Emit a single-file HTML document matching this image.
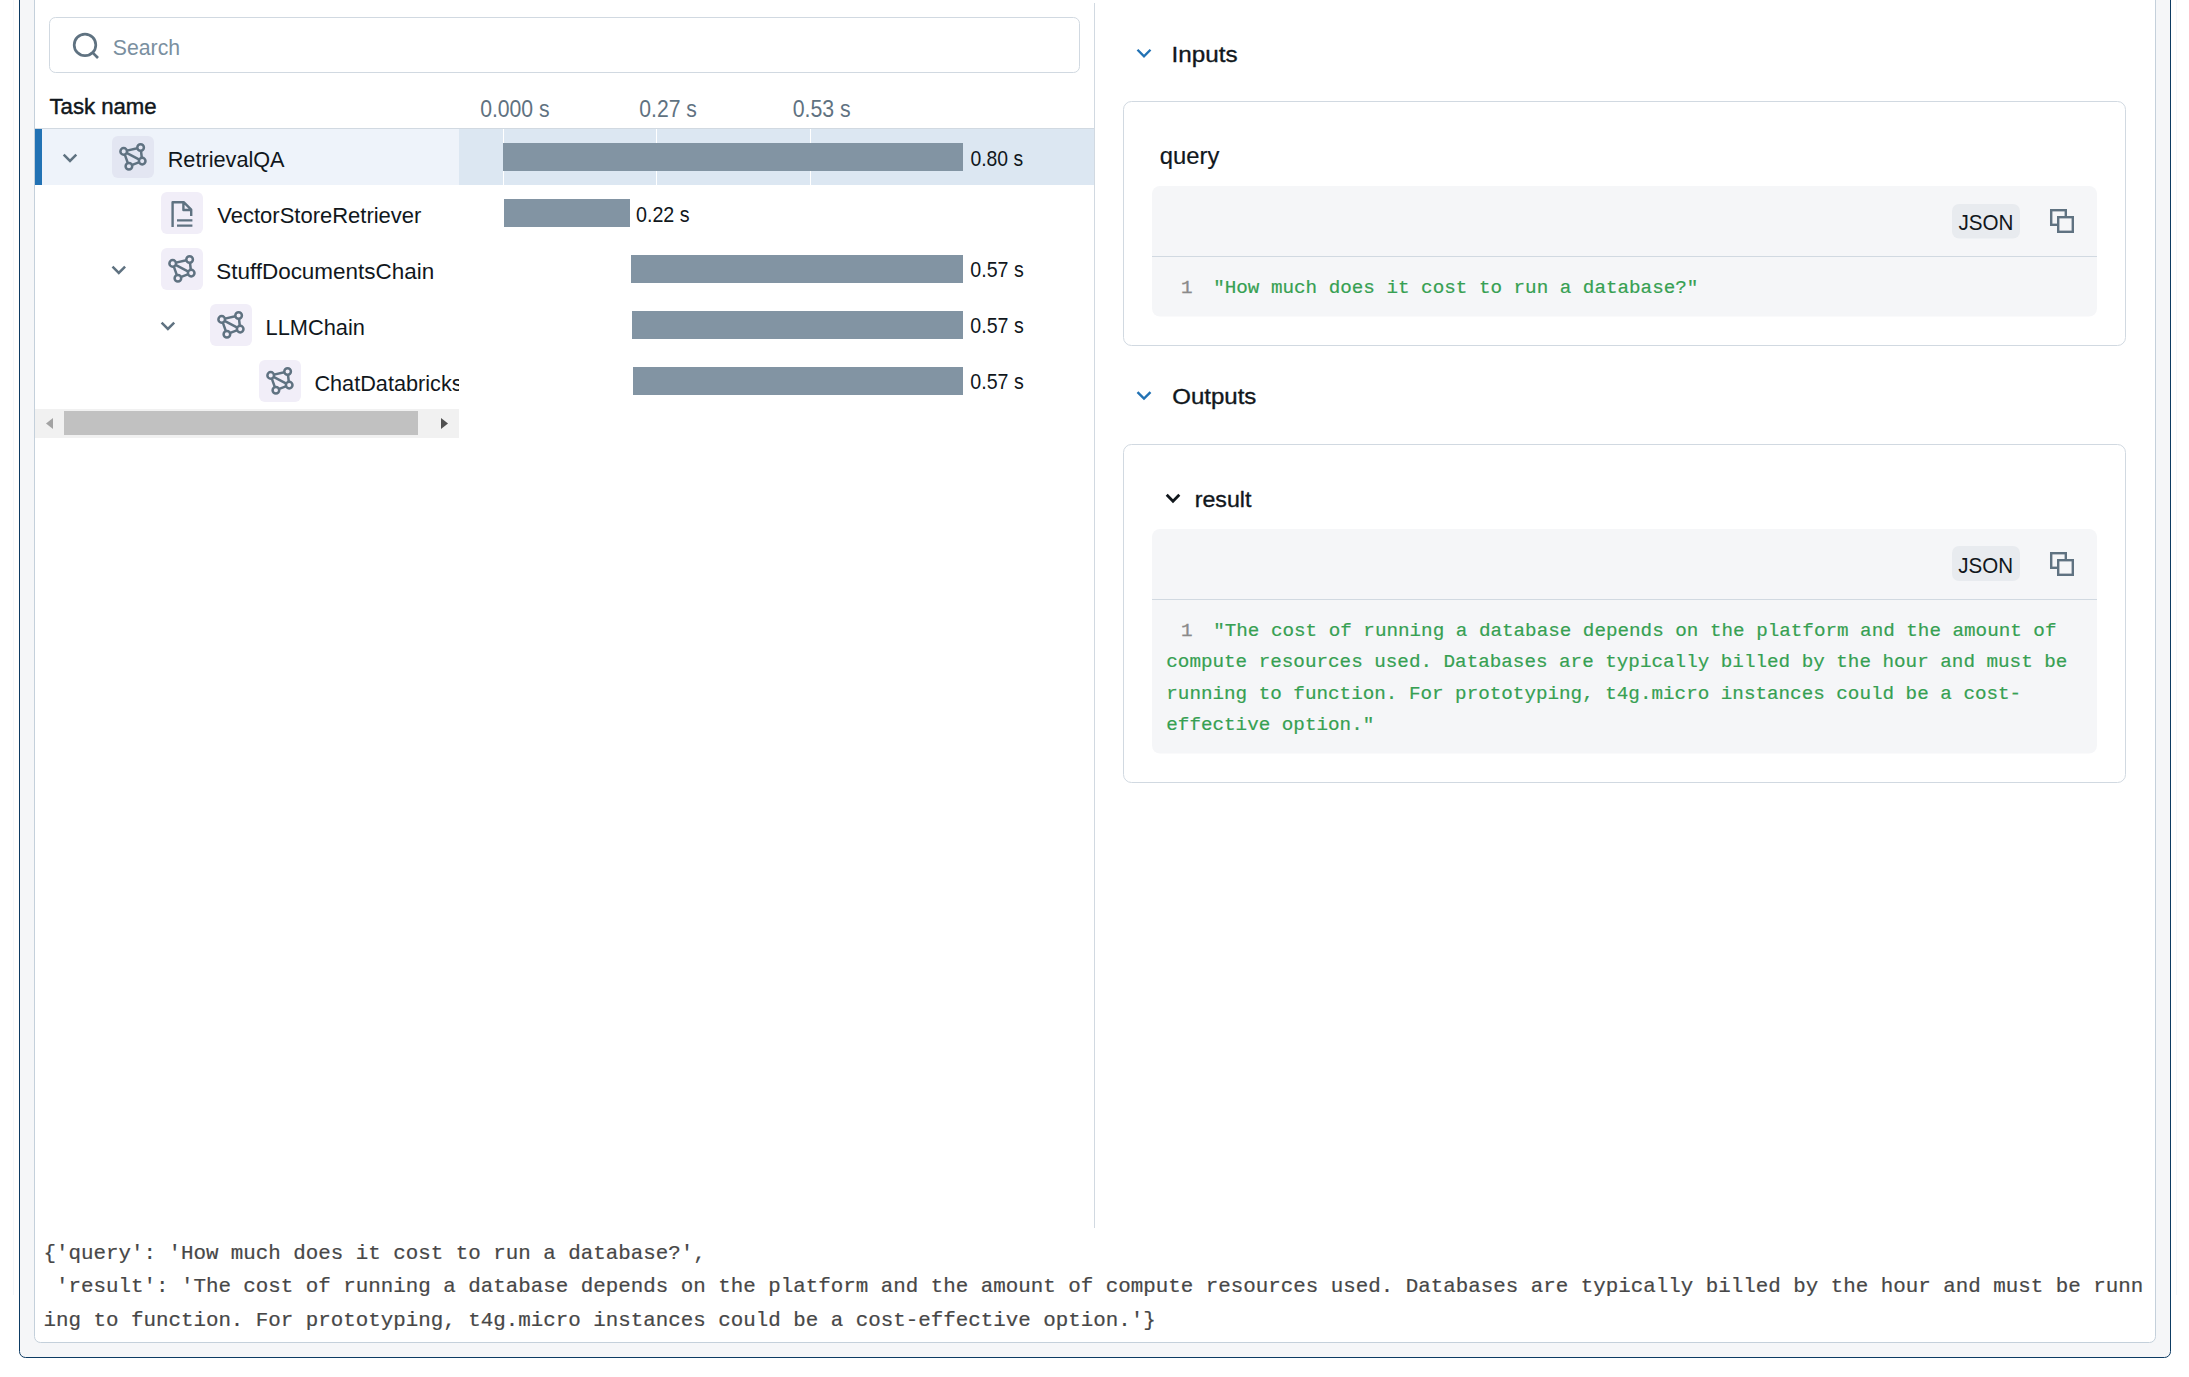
<!DOCTYPE html>
<html><head><meta charset="utf-8"><style>
html,body{margin:0;padding:0;background:#fff;width:2189px;height:1377px;overflow:hidden;}
svg{display:block;font-family:'Liberation Sans', sans-serif;}
</style></head><body>
<svg width="2189" height="1377" viewBox="0 0 2189 1377">
<defs><clipPath id="clipL"><rect x="35" y="0" width="424" height="1377"/></clipPath></defs>
<rect x="19.5" y="-20" width="2151" height="1377.5" rx="6" fill="#f5f6f8" stroke="#0d3b63" stroke-width="1"/>
<line x1="13.5" y1="0" x2="13.5" y2="1295" stroke="#f4f7fb" stroke-width="1"/>
<line x1="2176.5" y1="0" x2="2176.5" y2="1295" stroke="#f4f7fb" stroke-width="1"/>
<rect x="34.5" y="-20" width="2121" height="1362.5" rx="6" fill="#ffffff" stroke="#c4d0db" stroke-width="1"/>
<rect x="1094" y="3" width="1" height="1225" fill="#d1d9e1"/>
<rect x="49.5" y="17.5" width="1030" height="55" rx="6" fill="#fff" stroke="#d1d9e1" stroke-width="1"/>
<circle cx="85" cy="44.9" r="10.8" fill="none" stroke="#5f7281" stroke-width="2.7"/>
<path d="M92.6,52.6 L98,58" stroke="#5f7281" stroke-width="2.7" fill="none"/>
<rect x="35" y="128" width="1059" height="1" fill="#d1d9e1"/>
<rect x="35" y="129" width="424" height="56" fill="#eef3fa"/>
<rect x="459" y="129" width="635" height="56" fill="#dce7f2"/>
<rect x="503" y="129" width="1" height="56" fill="#ffffff"/>
<rect x="656" y="129" width="1" height="56" fill="#ffffff"/>
<rect x="810" y="129" width="1" height="56" fill="#ffffff"/>
<rect x="35" y="129" width="7" height="56" fill="#2272b4"/>
<rect x="503" y="143" width="460" height="28" fill="#8294a3"/>
<rect x="504" y="199" width="126" height="28" fill="#8294a3"/>
<rect x="631" y="255" width="332" height="28" fill="#8294a3"/>
<rect x="632" y="311" width="331" height="28" fill="#8294a3"/>
<rect x="633" y="367" width="330" height="28" fill="#8294a3"/>
<path d="M63.70,154.65 L70.00,160.95 L76.30,154.65" stroke="#5f7281" stroke-width="2.5" fill="none"/>
<path d="M112.50,266.65 L118.80,272.95 L125.10,266.65" stroke="#5f7281" stroke-width="2.5" fill="none"/>
<path d="M161.60,322.65 L167.90,328.95 L174.20,322.65" stroke="#5f7281" stroke-width="2.5" fill="none"/>
<rect x="112" y="136" width="42" height="42" rx="6" fill="#e3e6f2"/><path d="M123.70,151.40L140.60,147.50 M123.70,151.40L142.20,161.10 M123.70,151.40L128.90,166.20 M140.60,147.50L142.20,161.10 M128.90,166.20L142.20,161.10" stroke="#5f7281" stroke-width="2.5" fill="none"/><circle cx="123.70" cy="151.40" r="3.3" fill="#e3e6f2" stroke="#5f7281" stroke-width="2.5"/><circle cx="140.60" cy="147.50" r="3.3" fill="#e3e6f2" stroke="#5f7281" stroke-width="2.5"/><circle cx="142.20" cy="161.10" r="3.3" fill="#e3e6f2" stroke="#5f7281" stroke-width="2.5"/><circle cx="128.90" cy="166.20" r="3.3" fill="#e3e6f2" stroke="#5f7281" stroke-width="2.5"/>
<rect x="161" y="192" width="42" height="42" rx="6" fill="#f1eef8"/><path d="M172.6,226.9 V202.2 H183.7 L191.2,209.7 V216 M183.4,202.2 V210 H191.2 M177,220.4 H192.4 M177,225.6 H192.4" stroke="#5f7281" stroke-width="2.4" fill="none" stroke-linejoin="round"/>
<rect x="161" y="248" width="42" height="42" rx="6" fill="#f1eef8"/><path d="M172.70,263.40L189.60,259.50 M172.70,263.40L191.20,273.10 M172.70,263.40L177.90,278.20 M189.60,259.50L191.20,273.10 M177.90,278.20L191.20,273.10" stroke="#5f7281" stroke-width="2.5" fill="none"/><circle cx="172.70" cy="263.40" r="3.3" fill="#f1eef8" stroke="#5f7281" stroke-width="2.5"/><circle cx="189.60" cy="259.50" r="3.3" fill="#f1eef8" stroke="#5f7281" stroke-width="2.5"/><circle cx="191.20" cy="273.10" r="3.3" fill="#f1eef8" stroke="#5f7281" stroke-width="2.5"/><circle cx="177.90" cy="278.20" r="3.3" fill="#f1eef8" stroke="#5f7281" stroke-width="2.5"/>
<rect x="210" y="304" width="42" height="42" rx="6" fill="#f1eef8"/><path d="M221.70,319.40L238.60,315.50 M221.70,319.40L240.20,329.10 M221.70,319.40L226.90,334.20 M238.60,315.50L240.20,329.10 M226.90,334.20L240.20,329.10" stroke="#5f7281" stroke-width="2.5" fill="none"/><circle cx="221.70" cy="319.40" r="3.3" fill="#f1eef8" stroke="#5f7281" stroke-width="2.5"/><circle cx="238.60" cy="315.50" r="3.3" fill="#f1eef8" stroke="#5f7281" stroke-width="2.5"/><circle cx="240.20" cy="329.10" r="3.3" fill="#f1eef8" stroke="#5f7281" stroke-width="2.5"/><circle cx="226.90" cy="334.20" r="3.3" fill="#f1eef8" stroke="#5f7281" stroke-width="2.5"/>
<rect x="259" y="360" width="42" height="42" rx="6" fill="#f1eef8"/><path d="M270.70,375.40L287.60,371.50 M270.70,375.40L289.20,385.10 M270.70,375.40L275.90,390.20 M287.60,371.50L289.20,385.10 M275.90,390.20L289.20,385.10" stroke="#5f7281" stroke-width="2.5" fill="none"/><circle cx="270.70" cy="375.40" r="3.3" fill="#f1eef8" stroke="#5f7281" stroke-width="2.5"/><circle cx="287.60" cy="371.50" r="3.3" fill="#f1eef8" stroke="#5f7281" stroke-width="2.5"/><circle cx="289.20" cy="385.10" r="3.3" fill="#f1eef8" stroke="#5f7281" stroke-width="2.5"/><circle cx="275.90" cy="390.20" r="3.3" fill="#f1eef8" stroke="#5f7281" stroke-width="2.5"/>
<rect x="35" y="409" width="424" height="29" fill="#f1f1f1"/>
<rect x="64" y="411" width="354" height="24" fill="#c1c1c1"/>
<path d="M46,423.5 L53,418 L53,429 Z" fill="#a3a3a3"/>
<path d="M448,423.5 L441,418 L441,429 Z" fill="#505050"/>
<path d="M1137.50,49.75 L1144.00,56.25 L1150.50,49.75" stroke="#2272b4" stroke-width="2.4" fill="none"/>
<path d="M1137.50,392.15 L1144.00,398.65 L1150.50,392.15" stroke="#2272b4" stroke-width="2.4" fill="none"/>
<rect x="1123.5" y="101.5" width="1002" height="244" rx="8" fill="#fff" stroke="#d1d9e1" stroke-width="1"/>
<rect x="1152" y="186" width="945" height="130.5" rx="8" fill="#f5f6f8"/>
<rect x="1152" y="256" width="945" height="1" fill="#d1d9e1"/>
<rect x="1952" y="204" width="68" height="34.5" rx="7" fill="#e8ebef"/>
<rect x="2051.20" y="210.20" width="14.6" height="14.6" fill="none" stroke="#5f7281" stroke-width="2.4"/><rect x="2058.20" y="217.20" width="14.6" height="14.6" fill="#f5f6f8" stroke="#5f7281" stroke-width="2.4"/>
<rect x="1123.5" y="444.5" width="1002" height="338" rx="8" fill="#fff" stroke="#d1d9e1" stroke-width="1"/>
<path d="M1166.70,494.75 L1173.00,501.25 L1179.30,494.75" stroke="#11171c" stroke-width="2.8" fill="none"/>
<rect x="1152" y="529" width="945" height="224.5" rx="8" fill="#f5f6f8"/>
<rect x="1152" y="599" width="945" height="1" fill="#d1d9e1"/>
<rect x="1952" y="546" width="68" height="35" rx="7" fill="#e8ebef"/>
<rect x="2051.20" y="553.20" width="14.6" height="14.6" fill="none" stroke="#5f7281" stroke-width="2.4"/><rect x="2058.20" y="560.20" width="14.6" height="14.6" fill="#f5f6f8" stroke="#5f7281" stroke-width="2.4"/>
<text x="112.84" y="54.80" font-size="22.5" fill="#7a8fa0"  textLength="67.26" lengthAdjust="spacingAndGlyphs">Search</text>
<text x="49.48" y="113.90" font-size="22.5" fill="#11171c" stroke="#11171c" stroke-width="0.45" stroke-linejoin="round" textLength="107.19" lengthAdjust="spacingAndGlyphs">Task name</text>
<text x="480.14" y="116.90" font-size="23.3" fill="#5f7281"  textLength="69.52" lengthAdjust="spacingAndGlyphs">0.000 s</text>
<text x="639.34" y="116.90" font-size="23.3" fill="#5f7281"  textLength="57.62" lengthAdjust="spacingAndGlyphs">0.27 s</text>
<text x="792.63" y="116.90" font-size="23.3" fill="#5f7281"  textLength="58.03" lengthAdjust="spacingAndGlyphs">0.53 s</text>
<text x="167.71" y="167.00" font-size="22.5" fill="#11171c"  textLength="116.89" lengthAdjust="spacingAndGlyphs">RetrievalQA</text>
<text x="217.30" y="223.00" font-size="22.5" fill="#11171c"  textLength="204.11" lengthAdjust="spacingAndGlyphs">VectorStoreRetriever</text>
<text x="216.20" y="279.00" font-size="22.5" fill="#11171c"  textLength="217.96" lengthAdjust="spacingAndGlyphs">StuffDocumentsChain</text>
<text x="265.50" y="335.00" font-size="22.5" fill="#11171c"  textLength="99.43" lengthAdjust="spacingAndGlyphs">LLMChain</text>
<text x="970.40" y="165.60" font-size="21.3" fill="#11171c"  textLength="52.71" lengthAdjust="spacingAndGlyphs">0.80 s</text>
<text x="635.98" y="221.60" font-size="21.3" fill="#11171c"  textLength="53.63" lengthAdjust="spacingAndGlyphs">0.22 s</text>
<text x="970.29" y="277.30" font-size="21.3" fill="#11171c"  textLength="53.43" lengthAdjust="spacingAndGlyphs">0.57 s</text>
<text x="970.29" y="333.30" font-size="21.3" fill="#11171c"  textLength="53.43" lengthAdjust="spacingAndGlyphs">0.57 s</text>
<text x="970.29" y="389.30" font-size="21.3" fill="#11171c"  textLength="53.43" lengthAdjust="spacingAndGlyphs">0.57 s</text>
<text x="1171.58" y="62.00" font-size="22.5" fill="#11171c" stroke="#11171c" stroke-width="0.35" stroke-linejoin="round" textLength="66.00" lengthAdjust="spacingAndGlyphs">Inputs</text>
<text x="1159.76" y="164.00" font-size="23.0" fill="#11171c" stroke="#11171c" stroke-width="0.2" stroke-linejoin="round" textLength="59.54" lengthAdjust="spacingAndGlyphs">query</text>
<text x="1958.38" y="229.60" font-size="22.0" fill="#11171c"  textLength="55.00" lengthAdjust="spacingAndGlyphs">JSON</text>
<text x="1172.25" y="403.60" font-size="22.5" fill="#11171c" stroke="#11171c" stroke-width="0.35" stroke-linejoin="round" textLength="84.13" lengthAdjust="spacingAndGlyphs">Outputs</text>
<text x="1194.73" y="506.80" font-size="22.8" fill="#11171c" stroke="#11171c" stroke-width="0.35" stroke-linejoin="round" textLength="56.62" lengthAdjust="spacingAndGlyphs">result</text>
<text x="1958.28" y="572.80" font-size="22.0" fill="#11171c"  textLength="54.80" lengthAdjust="spacingAndGlyphs">JSON</text>
<text x="314.38" y="391" font-size="22.5" fill="#11171c" textLength="148.23" lengthAdjust="spacingAndGlyphs" clip-path="url(#clipL)">ChatDatabricks</text>
<text x="1181" y="292.8" font-family="'Liberation Mono', monospace" font-size="19.25" fill="#8a8a8a" stroke="#8a8a8a" stroke-width="0.35">1</text>
<text x="1213.2" y="292.8" font-family="'Liberation Mono', monospace" font-size="19.25" fill="#36a052" stroke="#36a052" stroke-width="0.2" xml:space="preserve">"How much does it cost to run a database?"</text>
<text x="1181" y="636.1" font-family="'Liberation Mono', monospace" font-size="19.25" fill="#8a8a8a" stroke="#8a8a8a" stroke-width="0.35">1</text>
<text x="1213.2" y="636.1" font-family="'Liberation Mono', monospace" font-size="19.25" fill="#36a052" stroke="#36a052" stroke-width="0.2" xml:space="preserve">&quot;The cost of running a database depends on the platform and the amount of</text>
<text x="1166.3" y="667.4" font-family="'Liberation Mono', monospace" font-size="19.25" fill="#36a052" stroke="#36a052" stroke-width="0.2" xml:space="preserve">compute resources used. Databases are typically billed by the hour and must be</text>
<text x="1166.3" y="699.4" font-family="'Liberation Mono', monospace" font-size="19.25" fill="#36a052" stroke="#36a052" stroke-width="0.2" xml:space="preserve">running to function. For prototyping, t4g.micro instances could be a cost-</text>
<text x="1166.3" y="730.2" font-family="'Liberation Mono', monospace" font-size="19.25" fill="#36a052" stroke="#36a052" stroke-width="0.2" xml:space="preserve">effective option.&quot;</text>
<text x="43.4" y="1258.9" font-family="'Liberation Mono', monospace" font-size="20.84" fill="#474747" stroke="#474747" stroke-width="0.2" xml:space="preserve">{&#x27;query&#x27;: &#x27;How much does it cost to run a database?&#x27;,</text>
<text x="43.4" y="1291.8" font-family="'Liberation Mono', monospace" font-size="20.84" fill="#474747" stroke="#474747" stroke-width="0.2" xml:space="preserve"> &#x27;result&#x27;: &#x27;The cost of running a database depends on the platform and the amount of compute resources used. Databases are typically billed by the hour and must be runn</text>
<text x="43.4" y="1325.5" font-family="'Liberation Mono', monospace" font-size="20.84" fill="#474747" stroke="#474747" stroke-width="0.2" xml:space="preserve">ing to function. For prototyping, t4g.micro instances could be a cost-effective option.&#x27;}</text>
</svg>
</body></html>
